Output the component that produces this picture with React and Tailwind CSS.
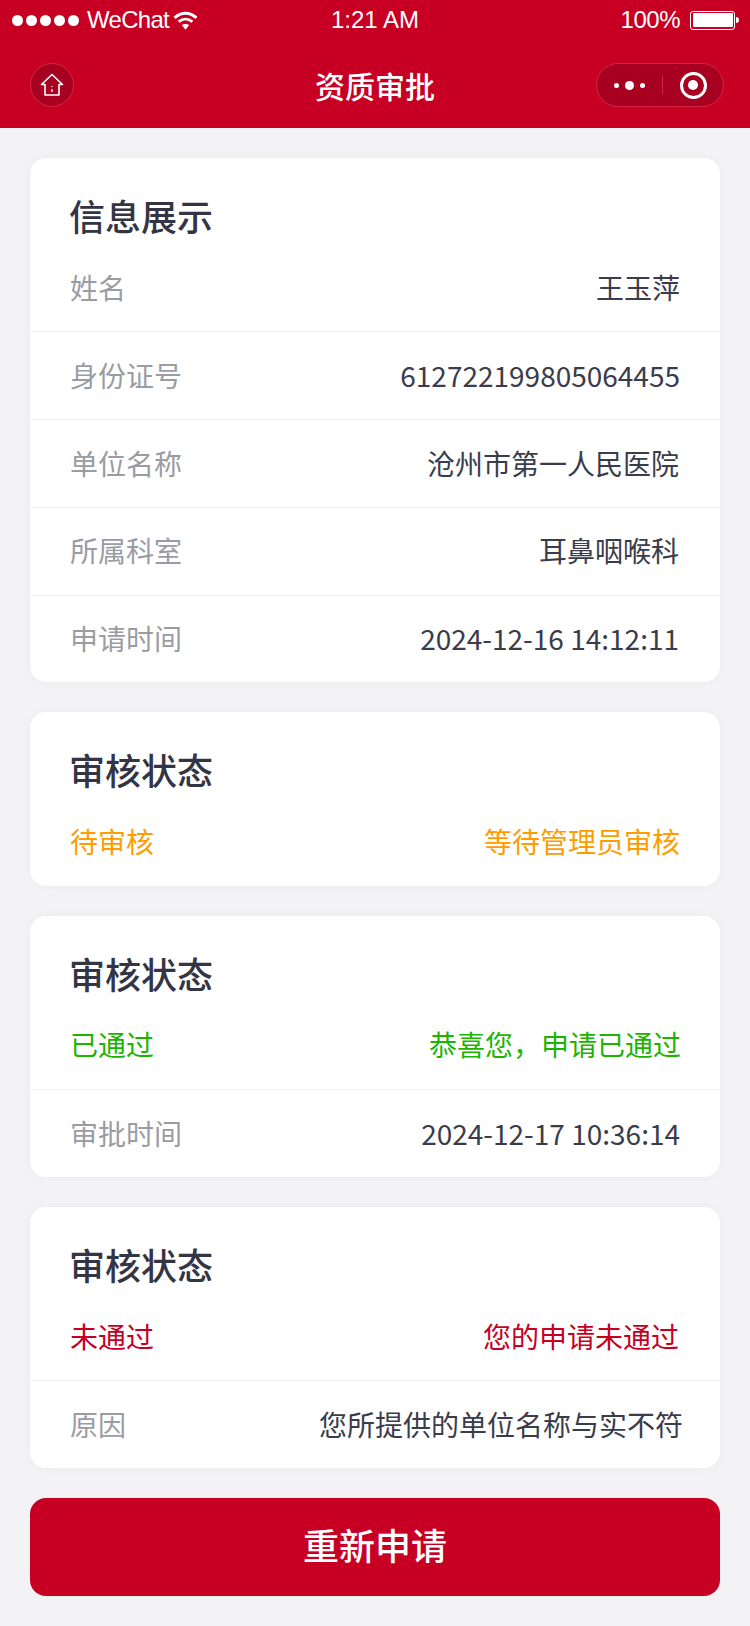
const F = { fontFamily: '"Noto Sans CJK SC", "Noto Sans", sans-serif' };
const S = { fontFamily: '"Helvetica Neue", "Liberation Sans", Arial, sans-serif' };

function Row({ label, value, labelClass = 'text-[#9a9ca3]', valueClass = 'text-[#3a3c4b]', border = false }) {
  return (
    <div className={`flex items-center justify-between px-10 pb-[2px] text-[28px] ${border ? 'h-[87.75px] border-t border-[#eeeeee]' : 'h-[87.4px]'}`}>
      <span className={labelClass}>{label}</span>
      <span className={valueClass}>{value}</span>
    </div>
  );
}

function Card({ title, children }) {
  return (
    <section className="bg-white rounded-[16px] shadow-[0_0_10px_rgba(0,0,0,0.04)] overflow-hidden">
      <h2 className="h-[86px] pl-[39px] pt-[27px] text-[36px] leading-[60px] font-medium text-[#333544]">{title}</h2>
      {children}
    </section>
  );
}

export default function App() {
  return (
    <div className="w-[750px] h-[1626px] bg-[#f3f3f6] flex flex-col" style={F}>
      <header className="bg-[#c70023] text-white h-[128px] shrink-0">
        <div className="relative h-10 flex items-center justify-between pl-3 pr-[11px] text-[24px]" style={S}>
          <div className="flex items-center">
            <div className="flex gap-[3px]">
              {[0, 1, 2, 3, 4].map((i) => <span key={i} className="w-[11px] h-[11px] rounded-full bg-white" />)}
            </div>
            <span className="ml-2 tracking-[-0.7px]">WeChat</span>
            <svg width="25" height="19" viewBox="0 0 24 18" className="ml-1" fill="none" stroke="white" strokeWidth="2.8">
              <path d="M1.5 6.5C8 0.6 16 0.6 22.5 6.5" />
              <path d="M5.4 10.2C9.4 6.8 14.6 6.8 18.6 10.2" />
              <path d="M12 17.8 8.4 13.4C10.6 12 13.4 12 15.6 13.4Z" fill="white" stroke="none" />
            </svg>
          </div>
          <span className="absolute left-0 right-0 text-center">1:21 AM</span>
          <div className="flex items-center">
            <span className="tracking-[-0.5px]">100%</span>
            <span className="ml-[10px] w-[45px] h-[19px] border border-white rounded-[3px] p-[1.5px] flex">
              <span className="flex-1 bg-white rounded-[1px]" />
            </span>
            <span className="ml-[1px] w-[3px] h-[6px] bg-white rounded-r-sm" />
          </div>
        </div>
        <div className="relative h-[88px] flex items-center justify-between pl-[30px] pr-[26px] pt-[2px]">
          <div className="w-11 h-11 rounded-full bg-[#a80020] border border-[#d52543] flex items-center justify-center">
            <svg width="24" height="24" viewBox="0 0 24 24" fill="none" stroke="white" strokeWidth="1.6" strokeLinejoin="round">
              <path d="M12 1.5 1.5 11.5H5V22H19V11.5H22.5Z" />
              <path d="M12 13v1M12 16v3" strokeWidth="1.3" />
            </svg>
          </div>
          <h1 className="absolute left-0 right-0 text-center text-[30px] font-medium">资质审批</h1>
          <div className="w-[128px] h-11 rounded-full bg-[#a80020] border border-[#d52543] flex items-center">
            <div className="w-[65px] flex items-center justify-center gap-[6px]">
              <span className="w-[5px] h-[5px] rounded-full bg-white" />
              <span className="w-[9px] h-[9px] rounded-full bg-white" />
              <span className="w-[5px] h-[5px] rounded-full bg-white" />
            </div>
            <span className="w-px h-[18px] bg-[#d52543]" />
            <div className="flex-1 flex items-center justify-center">
              <span className="w-[27px] h-[27px] rounded-full border-[3px] border-white flex items-center justify-center">
                <span className="w-[10px] h-[10px] rounded-full bg-white" />
              </span>
            </div>
          </div>
        </div>
      </header>

      <main className="flex-1 px-[30px] pt-[30px] flex flex-col gap-[30px]">
        <Card title="信息展示">
          <Row label="姓名" value="王玉萍" />
          <Row border label="身份证号" value="612722199805064455" />
          <Row border label="单位名称" value="沧州市第一人民医院" valueClass="text-[#3a3c4b] mr-px" />
          <Row border label="所属科室" value="耳鼻咽喉科" valueClass="text-[#3a3c4b] mr-px" />
          <Row border label="申请时间" value="2024-12-16 14:12:11" valueClass="text-[#3a3c4b] mr-px" />
        </Card>
        <Card title="审核状态">
          <Row label="待审核" value="等待管理员审核" labelClass="text-[#ff9d00]" valueClass="text-[#ff9d00]" />
        </Card>
        <Card title="审核状态">
          <Row label="已通过" value="恭喜您，申请已通过" labelClass="text-[#1db400]" valueClass="text-[#1db400] -mr-px" />
          <Row border label="审批时间" value="2024-12-17 10:36:14" />
        </Card>
        <Card title="审核状态">
          <Row label="未通过" value="您的申请未通过" labelClass="text-[#c70023]" valueClass="text-[#c70023] mr-px" />
          <Row border label="原因" value="您所提供的单位名称与实不符" valueClass="text-[#3a3c4b] -mr-[3px]" />
        </Card>
        <button className="h-[98px] rounded-[16px] bg-[#c70023] text-white text-[36px] font-medium pb-[6px]">重新申请</button>
      </main>
    </div>
  );
}
